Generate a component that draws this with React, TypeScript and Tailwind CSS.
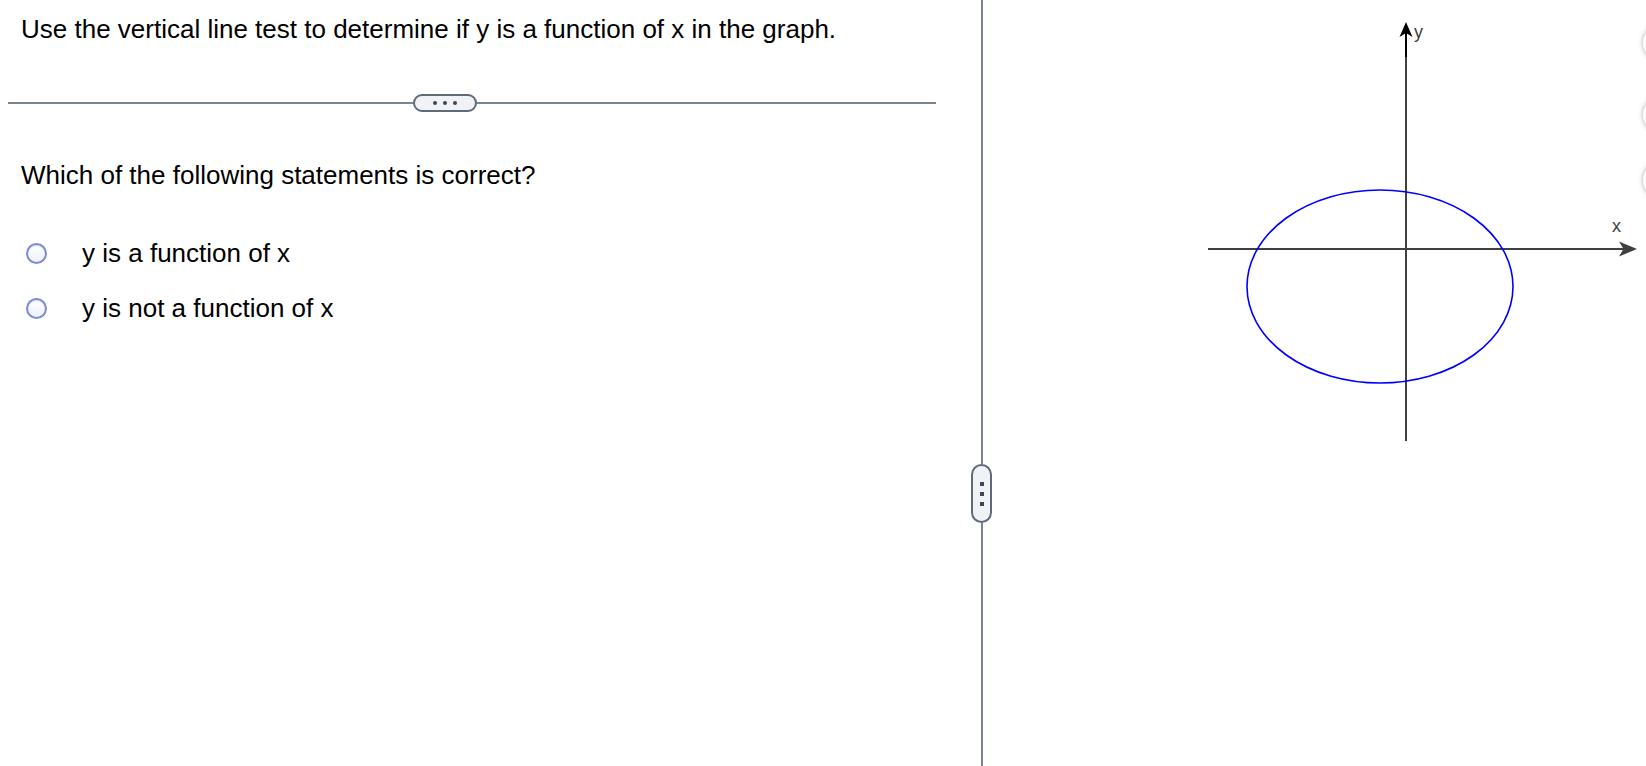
import React from "react";

const font = { fontFamily: '"Liberation Sans", Arial, Helvetica, sans-serif' };

function Radio() {
    return (
        <span className="ml-[5px] w-[21px] h-[21px] rounded-full border-[2.5px] border-[#7d8cd4] bg-gradient-to-b from-white to-[#eef1fb] shadow-[inset_0_1px_1px_rgba(90,110,200,0.25)] shrink-0" />
    );
}

function Graph() {
    return (
        <svg width={654} height={460} viewBox="992 0 654 460" className="block">
            {/* axes */}
            <line x1={1208} y1={249} x2={1626} y2={249} stroke="#404040" strokeWidth={2} />
            <path d="M1637 249 L1619 241.5 L1623.5 249 L1619 256.5 Z" fill="#404040" />
            <line x1={1406} y1={50} x2={1406} y2={441} stroke="#404040" strokeWidth={2} />
            <line x1={1406} y1={32} x2={1406} y2={57} stroke="#000" strokeWidth={2} />
            <path d="M1406 22 L1412.5 37 L1406 33 L1399.5 37 Z" fill="#000" />
            <text x={1414} y={38} fontSize={18} fill="#404040" style={font}>y</text>
            <text x={1612} y={232} fontSize={18} fill="#404040" style={font}>x</text>
            {/* curve */}
            <ellipse cx={1380} cy={286.5} rx={133} ry={96.5} fill="none" stroke="#0000ff" strokeWidth={1.6} />
        </svg>
    );
}

export default function App() {
    const options = ["y is a function of x", "y is not a function of x"];

    return (
        <div className="flex h-[766px] w-[1646px] bg-white text-black overflow-hidden" style={font}>
            {/* question panel */}
            <div className="w-[971px] shrink-0 flex flex-col">
                <div className="pl-[21px] pt-[14px] text-[26px] leading-[30px]">
                    Use the vertical line test to determine if y is a function of x in the graph.
                </div>

                <div className="mt-[50px] ml-[8px] w-[928px] flex items-center">
                    <div className="w-[405px] h-[2px] bg-[#7b8491]" />
                    <button className="w-[64px] h-[18px] rounded-full border-2 border-[#5f6b7a] bg-[#f1f2f5] flex items-center justify-center gap-[6px]">
                        <span className="w-[4px] h-[4px] rounded-full bg-[#3f4652]" />
                        <span className="w-[4px] h-[4px] rounded-full bg-[#3f4652]" />
                        <span className="w-[4px] h-[4px] rounded-full bg-[#3f4652]" />
                    </button>
                    <div className="flex-1 h-[2px] bg-[#7b8491]" />
                </div>

                <div className="pl-[21px] mt-[48px] text-[26px] leading-[30px]">
                    Which of the following statements is correct?
                </div>

                <div className="pl-[21px] mt-[48px] flex flex-col gap-[25px]">
                    {options.map((o) => (
                        <label key={o} className="flex items-center h-[30px] text-[26px] leading-[30px]">
                            <Radio />
                            <span className="ml-[35px]">{o}</span>
                        </label>
                    ))}
                </div>
            </div>

            {/* divider */}
            <div className="w-[21px] shrink-0 flex flex-col items-center">
                <div className="w-[2px] h-[464px] bg-[#7b8491]" />
                <div className="w-[21px] h-[59px] rounded-full border-2 border-[#5f6b7a] bg-[#f1f2f5] flex flex-col items-center justify-center gap-[6px]">
                    <span className="w-[4px] h-[4px] bg-[#3f4652]" />
                    <span className="w-[4px] h-[4px] bg-[#3f4652]" />
                    <span className="w-[4px] h-[4px] bg-[#3f4652]" />
                </div>
                <div className="w-[2px] flex-1 bg-[#7b8491]" />
            </div>

            {/* graph panel */}
            <div className="relative flex-1">
                <Graph />
                <div className="absolute left-[651px] top-[25px] w-[36px] h-[36px] rounded-full bg-white shadow-[0_0_5px_rgba(0,0,0,0.35)]" />
                <div className="absolute left-[651px] top-[97px] w-[36px] h-[36px] rounded-full bg-white shadow-[0_0_5px_rgba(0,0,0,0.35)]" />
                <div className="absolute left-[651px] top-[162px] w-[36px] h-[36px] rounded-full bg-white shadow-[0_0_5px_rgba(0,0,0,0.35)]" />
            </div>
        </div>
    );
}
